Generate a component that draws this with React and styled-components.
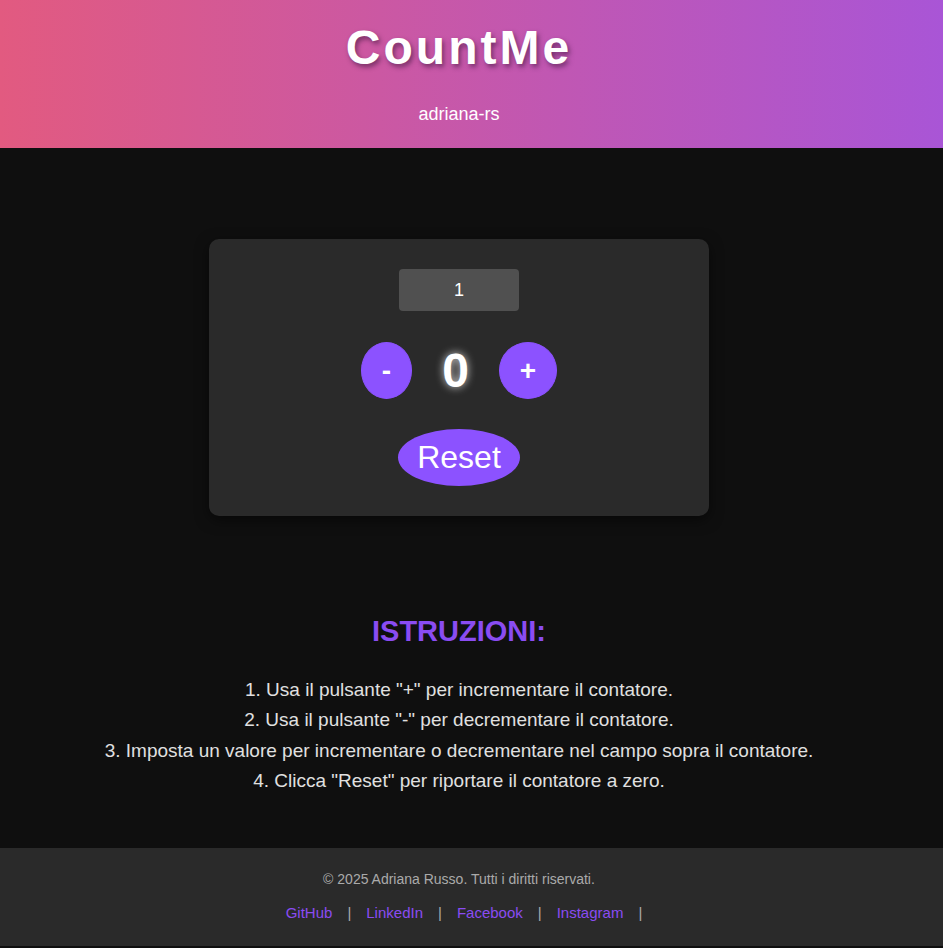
import React, { useState } from "react";
import styled, { createGlobalStyle } from "styled-components";

const GlobalStyle = createGlobalStyle`
  html, body {
    margin: 0;
    padding: 0;
    background: #0f0f0f;
    font-family: "Liberation Sans", Arial, sans-serif;
  }
  * { box-sizing: border-box; }
`;

const links = ["GitHub", "LinkedIn", "Facebook", "Instagram"];

const steps = [
  '1. Usa il pulsante "+" per incrementare il contatore.',
  '2. Usa il pulsante "-" per decrementare il contatore.',
  "3. Imposta un valore per incrementare o decrementare nel campo sopra il contatore.",
  '4. Clicca "Reset" per riportare il contatore a zero.',
];

const App = () => {
  const [count, setCount] = useState(0);
  const [step, setStep] = useState(1);

  return (
    <Page>
      <GlobalStyle />
      <Header>
        <Title>CountMe</Title>
        <Subtitle>adriana-rs</Subtitle>
      </Header>

      <Main>
        <Card>
          <StepInput
            type="number"
            value={step}
            onChange={(e) => setStep(Number(e.target.value))}
          />
          <CounterRow>
            <RoundButton onClick={() => setCount(count - step)}>-</RoundButton>
            <Count>{count}</Count>
            <RoundButton onClick={() => setCount(count + step)}>+</RoundButton>
          </CounterRow>
          <ResetButton onClick={() => setCount(0)}>Reset</ResetButton>
        </Card>

        <Instructions>
          <InstrTitle>ISTRUZIONI:</InstrTitle>
          {steps.map((s, i) => (
            <InstrLine key={i}>{s}</InstrLine>
          ))}
        </Instructions>
      </Main>

      <Footer>
        <Copy>© 2025 Adriana Russo. Tutti i diritti riservati.</Copy>
        <LinkRow>
          {links.map((l) => (
            <React.Fragment key={l}>
              <FooterLink href="#">{l}</FooterLink>
              <Sep>|</Sep>
            </React.Fragment>
          ))}
        </LinkRow>
      </Footer>
    </Page>
  );
};

export default App;

// the content column is centred on 918px, not on the full window
const Page = styled.div`
  display: flex;
  flex-direction: column;
  min-height: 948px;
  background: #0f0f0f;
`;

const Header = styled.header`
  height: 148px;
  background: linear-gradient(90deg, #e25a80 0%, #a955d6 100%);
  display: flex;
  flex-direction: column;
  align-items: center;
  padding: 20px 25px 0 0;
`;

const Title = styled.h1`
  margin: 0;
  color: #fff;
  font-size: 48px;
  line-height: 55px;
  font-weight: 700;
  letter-spacing: 3px;
  text-shadow: 2px 3px 5px rgba(60, 20, 60, 0.6);
`;

const Subtitle = styled.p`
  margin: 28px 0 0;
  color: #fff;
  font-size: 18px;
  line-height: 22px;
`;

const Main = styled.main`
  flex: 1;
  display: flex;
  flex-direction: column;
  align-items: center;
  padding: 91px 25px 0 0;
`;

const Card = styled.div`
  width: 500px;
  background: #2a2a2a;
  border-radius: 10px;
  padding: 30px;
  display: flex;
  flex-direction: column;
  align-items: center;
  box-shadow: 0 4px 14px rgba(0, 0, 0, 0.5);
`;

const StepInput = styled.input`
  width: 120px;
  height: 42px;
  border: none;
  border-radius: 4px;
  background: #505050;
  color: #fff;
  font-family: inherit;
  font-size: 18px;
  text-align: center;
  outline: none;
  -moz-appearance: textfield;

  &::-webkit-outer-spin-button,
  &::-webkit-inner-spin-button {
    -webkit-appearance: none;
    margin: 0;
  }
`;

const CounterRow = styled.div`
  display: flex;
  align-items: center;
  gap: 30px;
  margin-top: 31px;
`;

const RoundButton = styled.button`
  background: #8c52ff;
  color: #fff;
  border: 1px solid #8c52ff;
  border-radius: 50%;
  font-family: inherit;
  font-size: 28px;
  font-weight: 700;
  line-height: 33px;
  padding: 11px 20px;
  cursor: pointer;
`;

const Count = styled.span`
  color: #fff;
  font-size: 48px;
  font-weight: 700;
  line-height: 57px;
  text-shadow: 0 0 8px rgba(255, 255, 255, 0.8);
`;

const ResetButton = styled.button`
  margin-top: 30px;
  background: #8c52ff;
  color: #fff;
  border: none;
  border-radius: 50%;
  font-family: inherit;
  font-size: 32px;
  line-height: 37px;
  padding: 10px 19px;
  cursor: pointer;
`;

const Instructions = styled.section`
  margin-top: 100px;
  display: flex;
  flex-direction: column;
  align-items: center;
  text-align: center;
`;

const InstrTitle = styled.h2`
  margin: 0 0 29px;
  color: #8a4cf2;
  font-size: 29px;
  line-height: 30px;
  font-weight: 700;
`;

const InstrLine = styled.p`
  margin: 0;
  color: #e0e0e0;
  font-size: 19px;
  line-height: 30.4px;
`;

const Footer = styled.footer`
  height: 98px;
  margin-bottom: 2px;
  background: #2a2a2a;
  display: flex;
  flex-direction: column;
  align-items: center;
  padding: 22px 25px 0 0;
`;

const Copy = styled.p`
  margin: 0;
  color: #aaa;
  font-size: 14px;
  line-height: 18px;
`;

const LinkRow = styled.div`
  margin: 15px 0 0 10px;
  display: flex;
  align-items: center;
  gap: 15px;
  font-size: 15px;
  line-height: 20px;
`;

const FooterLink = styled.a`
  color: #8a4cf2;
  text-decoration: none;
`;

const Sep = styled.span`
  color: #aaa;
`;
